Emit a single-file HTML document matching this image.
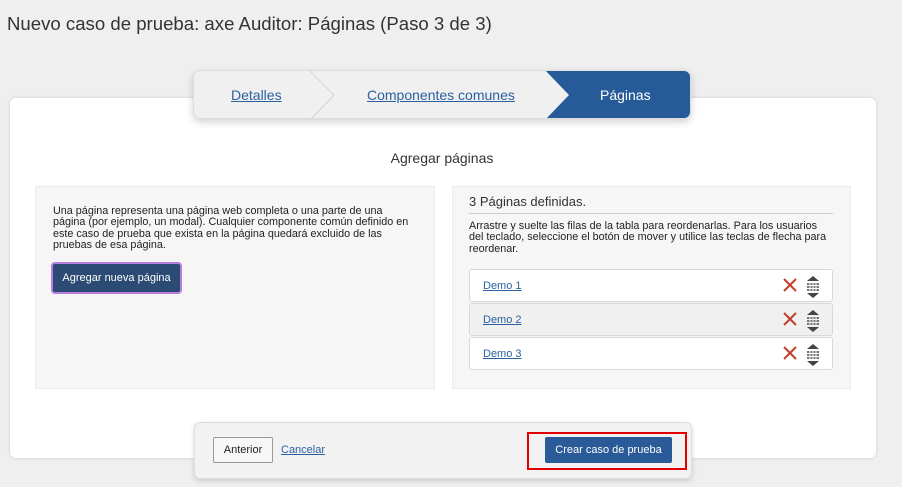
<!DOCTYPE html>
<html><head><meta charset="utf-8"><style>
*{margin:0;padding:0;box-sizing:border-box}
body{width:902px;height:487px;background:#efefef;font-family:"Liberation Sans",Arial,sans-serif;position:relative;overflow:hidden;color:#333}
.a{position:absolute}
a{color:#2b5fa0;text-decoration:underline}
.row{position:absolute;left:469px;width:364px;height:33px;border:1px solid #d8d8d8;border-radius:3px;background:#fff}
.row a{position:absolute;left:13px;top:10px;font-size:11px}
.x{position:absolute;left:313px;top:8px}
.g{position:absolute;left:335px;top:5px}
</style></head><body>
<div class="a" style="left:7px;top:13px;font-size:18.6px;color:#333">Nuevo caso de prueba: axe Auditor: Páginas (Paso 3 de 3)</div>
<div class="a" style="left:10px;top:98px;width:866px;height:360px;background:#fff;border-radius:6px;box-shadow:0 0 3px rgba(0,0,0,.15)"></div>
<div class="a" style="left:193px;top:70px;width:498px;height:49px;background:#f0f0f0;border:1px solid #ddd;border-radius:7px;box-shadow:0 3px 8px rgba(0,0,0,.18);overflow:hidden">
<svg class="a" style="left:0;top:0" width="498" height="49"><polyline points="116,0 140,24 116,49" fill="none" stroke="#d4d4d4" stroke-width="1"/><polygon points="351,-1 497,-1 497,49 351,49 375,24" fill="#275a98"/></svg>
<a class="a" style="left:37px;top:16px;font-size:14px">Detalles</a>
<a class="a" style="left:173px;top:16px;font-size:14px">Componentes comunes</a>
<span class="a" style="left:406px;top:16px;font-size:14px;color:#fff">Páginas</span>
</div>
<div class="a" style="left:0;width:902px;top:150px;text-align:center;font-size:14px;color:#333;padding-right:18px">Agregar páginas</div>
<div class="a" style="left:35px;top:186px;width:400px;height:203px;background:#f6f6f6;border:1px solid #ececec"></div>
<div class="a" style="left:53px;top:206px;width:362px;font-size:10.8px;line-height:11.3px;color:#222">Una página representa una página web completa o una parte de una página (por ejemplo, un modal). Cualquier componente común definido en este caso de prueba que exista en la página quedará excluido de las pruebas de esa página.</div>
<div class="a" style="left:51px;top:262px;width:131px;height:32px;background:#2b4a74;border:2px solid #b77ee0;border-radius:4px;color:#fff;font-size:11px;text-align:center;line-height:28px">Agregar nueva página</div>
<div class="a" style="left:452px;top:186px;width:399px;height:203px;background:#f6f6f6;border:1px solid #ececec"></div>
<div class="a" style="left:469px;top:194px;font-size:13px;color:#333">3 Páginas definidas.</div>
<div class="a" style="left:469px;top:213px;width:364px;height:1px;background:#ccc"></div>
<div class="a" style="left:469px;top:221px;width:358px;font-size:10.8px;line-height:11.3px;color:#222">Arrastre y suelte las filas de la tabla para reordenarlas. Para los usuarios del teclado, seleccione el botón de mover y utilice las teclas de flecha para reordenar.</div>
<div class="row" style="top:269px"><a>Demo 1</a>
<svg class="x" width="14" height="14"><path d="M1 1L13 13M13 1L1 13" stroke="#c0402a" stroke-width="2"/></svg>
<svg class="g" width="16" height="24"><path d="M8 1L14 6H2Z M8 23L14 18H2Z" fill="#444"/><g fill="#777"><rect x="2" y="8" width="12" height="2"/><rect x="2" y="11" width="12" height="2"/><rect x="2" y="14" width="12" height="2"/></g><g fill="#fff"><rect x="4.5" y="7" width="1" height="10"/><rect x="7.5" y="7" width="1" height="10"/><rect x="10.5" y="7" width="1" height="10"/></g></svg></div>
<div class="row" style="top:303px;background:#f0f0f0"><a>Demo 2</a>
<svg class="x" width="14" height="14"><path d="M1 1L13 13M13 1L1 13" stroke="#c0402a" stroke-width="2"/></svg>
<svg class="g" width="16" height="24"><path d="M8 1L14 6H2Z M8 23L14 18H2Z" fill="#444"/><g fill="#777"><rect x="2" y="8" width="12" height="2"/><rect x="2" y="11" width="12" height="2"/><rect x="2" y="14" width="12" height="2"/></g><g fill="#f0f0f0"><rect x="4.5" y="7" width="1" height="10"/><rect x="7.5" y="7" width="1" height="10"/><rect x="10.5" y="7" width="1" height="10"/></g></svg></div>
<div class="row" style="top:337px"><a>Demo 3</a>
<svg class="x" width="14" height="14"><path d="M1 1L13 13M13 1L1 13" stroke="#c0402a" stroke-width="2"/></svg>
<svg class="g" width="16" height="24"><path d="M8 1L14 6H2Z M8 23L14 18H2Z" fill="#444"/><g fill="#777"><rect x="2" y="8" width="12" height="2"/><rect x="2" y="11" width="12" height="2"/><rect x="2" y="14" width="12" height="2"/></g><g fill="#fff"><rect x="4.5" y="7" width="1" height="10"/><rect x="7.5" y="7" width="1" height="10"/><rect x="10.5" y="7" width="1" height="10"/></g></svg></div>
<div class="a" style="left:194px;top:422px;width:498px;height:57px;background:#f2f2f2;border:1px solid #ddd;border-radius:6px;box-shadow:0 2px 6px rgba(0,0,0,.15)"></div>
<div class="a" style="left:213px;top:437px;width:60px;height:26px;border:1px solid #999;background:#f7f7f7;border-radius:2px;font-size:11px;text-align:center;line-height:24px;color:#222">Anterior</div>
<a class="a" style="left:281px;top:444px;font-size:11px">Cancelar</a>
<div class="a" style="left:527px;top:432px;width:160px;height:38px;border:2px solid #e00000"></div>
<div class="a" style="left:545px;top:437px;width:127px;height:26px;background:#2a5a97;border-radius:2px;color:#fff;font-size:11px;text-align:center;line-height:26px">Crear caso de prueba</div>
</body></html>
